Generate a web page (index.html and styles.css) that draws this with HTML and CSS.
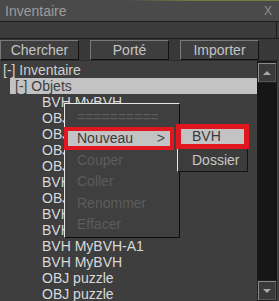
FILE: index.html
```html
<!DOCTYPE html>
<html lang="fr">
<head>
    <meta charset="UTF-8">
    <meta name="viewport" content="width=device-width, initial-scale=1.0">
    <title>Inventaire</title>
    <link rel="stylesheet" href="styles.css">
</head>
<body>
    <div class="window">
        <div class="titlebar">
            <span class="title">Inventaire</span>
            <span class="close">X</span>
        </div>
        <div class="search">
            <input type="text" class="search-input">
        </div>
        <div class="toolbar">
            <button class="tool-btn">Chercher</button>
            <button class="tool-btn">Porté</button>
            <button class="tool-btn">Importer</button>
        </div>
        <div class="panel">
            <ul class="tree">
                <li class="row root">[-] Inventaire</li>
                <li class="row folder selected">[-] Objets</li>
                <li class="row item">BVH MyBVH</li>
                <li class="row item">OBJ puzzle</li>
                <li class="row item">OBJ puzzle</li>
                <li class="row item">OBJ puzzle</li>
                <li class="row item">OBJ puzzle</li>
                <li class="row item">BVH MyBVH</li>
                <li class="row item">OBJ puzzle</li>
                <li class="row item">BVH MyBVH</li>
                <li class="row item">BVH MyBVH</li>
                <li class="row item">BVH MyBVH-A1</li>
                <li class="row item">BVH MyBVH</li>
                <li class="row item">OBJ puzzle</li>
                <li class="row item">OBJ puzzle</li>
            </ul>
            <div class="scrollbar">
                <div class="scroll-btn"><span class="arrow-up"></span></div>
                <div class="scroll-track"></div>
                <div class="scroll-btn"><span class="arrow-down"></span></div>
            </div>
        </div>

        <!-- menu contextuel -->
        <div class="menu">
            <div class="menu-item sep">==========</div>
            <div class="menu-item hot marked"><span>Nouveau</span><span class="more">&gt;</span></div>
            <div class="menu-item off">Couper</div>
            <div class="menu-item off">Coller</div>
            <div class="menu-item off">Renommer</div>
            <div class="menu-item off">Effacer</div>
        </div>
        <div class="submenu">
            <div class="sub-item hot marked">BVH</div>
            <div class="sub-item">Dossier</div>
        </div>
    </div>
</body>
</html>
```

FILE: styles.css
```css
body {
    margin: 0;
    padding: 0;
    background-color: #3e3e3e;
    font-family: "Liberation Sans", Arial, sans-serif;
    font-size: 13px;
}
.window {
    position: relative;
    width: 279px;
    height: 301px;
    overflow: hidden;
    display: flex;
    flex-direction: column;
    background-color: #3e3e3e;
}
.titlebar {
    height: 20px;
    display: flex;
    justify-content: space-between;
    align-items: center;
    padding: 0 7px 0 5px;
    background-color: #4a4a4a;
    border-top: 1px solid #4a4a4a;
    border-image: linear-gradient(to right, #4a4a4a 45%, #6f7f3e 70%, #6f7f3e) 1 0 0 0;
    color: #9c9c9c;
}
.title {
    font-size: 14px;
}
.close {
    font-size: 12px;
    color: #8e8e8e;
}
.search {
    border-top: 1px solid #1c1c1c;
    border-bottom: 1px solid #1c1c1c;
    padding-right: 2px;
}
.search-input {
    display: block;
    width: 100%;
    height: 16px;
    box-sizing: border-box;
    margin: 0;
    padding: 0;
    border: 0;
    border-right: 1px solid #1c1c1c;
    background-color: #3b3b3b;
}
.toolbar {
    display: flex;
    gap: 11px;
    padding-top: 1px;
    background-color: #383838;
}
.tool-btn {
    width: 79px;
    height: 20px;
    padding: 0;
    margin: 0;
    border: 1px solid #111;
    border-top-color: #7a7a7a;
    border-left-color: #7a7a7a;
    background-color: #3e3e3e;
    color: #c4c4c4;
    font-family: "Liberation Sans", Arial, sans-serif;
    font-size: 14px;
}
.panel {
    flex: 1;
    display: flex;
    border-top: 1px solid #2c2c2c;
    min-height: 0;
}
.tree {
    flex: 1;
    list-style: none;
    margin: 0;
    padding: 1px 0 0 0;
}
.row {
    height: 16px;
    line-height: 16px;
    color: #dadada;
    font-size: 14px;
    white-space: nowrap;
}
.root {
    padding-left: 3px;
    color: #d0d0d0;
}
.folder {
    margin-left: 10px;
    padding-left: 5px;
}
.selected {
    background-color: #c3c3c3;
    color: #3e3e3e;
}
.item {
    padding-left: 42px;
}
.scrollbar {
    width: 20px;
    margin-right: 2px;
    display: flex;
    flex-direction: column;
    background-color: #161616;
}
.scroll-btn {
    height: 19px;
    display: flex;
    justify-content: center;
    align-items: center;
    border: 1px solid #202020;
    box-shadow: inset 1px 1px 0 #8a8a8a, inset -1px -1px 0 #555;
    background-color: #3a3a3a;
    margin-top: 1px;
}
.scroll-track {
    flex: 1;
}
.arrow-up, .arrow-down {
    width: 0;
    height: 0;
    border-left: 4px solid transparent;
    border-right: 4px solid transparent;
}
.arrow-up {
    border-bottom: 4px solid #a8a8a8;
}
.arrow-down {
    border-top: 4px solid #a8a8a8;
}

.menu {
    position: absolute;
    left: 64px;
    top: 103px;
    width: 114px;
    padding: 5.5px 0 5px 0;
    display: flex;
    flex-direction: column;
    gap: 6.5px;
    background-color: #3f3f3f;
    border: 1px solid #0c0c0c;
    border-top-color: #e8e8e8;
    border-left-color: #e8e8e8;
}
.menu-item {
    height: 15px;
    line-height: 15px;
    margin: 0 9px 0 3px;
    padding: 0 5px 0 9px;
    display: flex;
    justify-content: space-between;
    color: #d0d0d0;
    font-size: 14px;
}
.sep, .off {
    color: #5c5c5c;
}
.more {
    color: #4a4a4a;
}
.submenu {
    position: absolute;
    left: 177px;
    top: 125px;
    width: 63px;
    padding: 3px 3px 3.5px 3px;
    display: flex;
    flex-direction: column;
    gap: 8.5px;
    background-color: #3c3c3c;
    border: 1px solid #141414;
    border-left-color: #e8e8e8;
}
.sub-item {
    height: 15px;
    line-height: 15px;
    padding-left: 11px;
    color: #c8c8c8;
    font-size: 14px;
}
.menu .hot, .submenu .hot {
    background-color: #c3c3c3;
    color: #3a3a3a;
}
.marked {
    outline: 4px solid #e2161f;
}
.submenu .marked {
    outline-width: 5px;
}
```
